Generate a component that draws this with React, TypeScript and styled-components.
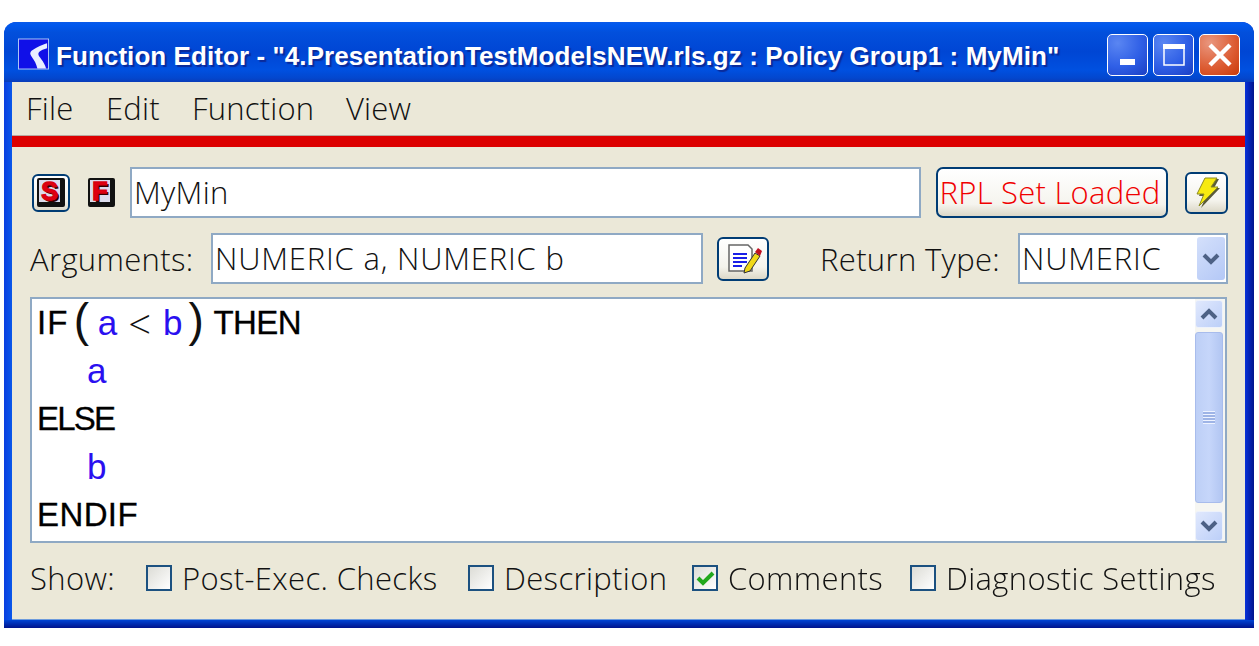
import React from "react";
import styled, { createGlobalStyle } from "styled-components";

const UI = `"Open Sans", "Liberation Sans", Arial, sans-serif`;

const Global = createGlobalStyle`
  html, body { margin: 0; padding: 0; background: #fff; }
  body { width: 1259px; height: 646px; overflow: hidden; font-family: ${UI}; font-weight: 300; }
`;
const Page = styled.div`
  box-sizing: border-box; width: 1259px; height: 646px; padding: 22px 5px 18px 4px;
`;
const Win = styled.div`
  box-sizing: border-box; width: 1250px; height: 606px; display: flex; flex-direction: column;
  border-radius: 12px 12px 0 0; padding: 0 9px 0 8px;
  background: linear-gradient(90deg, #0a3ee0 0, #0a58ea 8px, #0831d9 9px, #0831d9 calc(100% - 9px), #00138c 100%);
  filter: blur(0.35px);
`;
const TitleBar = styled.div`
  height: 60px; flex: none; display: flex; align-items: center; margin: 0 -9px 0 -8px; padding: 6px 14px 0 14px;
  border-radius: 12px 12px 0 0;
  background: linear-gradient(180deg, #0a5ae8 0, #0058ee 3px, #0250dc 10px, #0046d4 30px, #0050e0 48px, #0347ce 56px, #0a3cb8 60px);
  box-sizing: border-box;
`;
const Logo = styled.svg` width: 31px; height: 32px; flex: none; margin-top: -2px; `;
const Title = styled.div`
  margin: 3px 0 0 7px; flex: 1; color: #fff; font: bold 26px "Liberation Sans", sans-serif;
  letter-spacing: 0.07px; white-space: nowrap; text-shadow: 2px 2px 1px #0a2a9a;
`;
const WinButtons = styled.div` display: flex; gap: 5px; `;
const WinBtn = styled.div<{ $close?: boolean }>`
  box-sizing: border-box; width: 41px; height: 42px; border: 1.5px solid #fff; border-radius: 5px; display: flex; align-items: center; justify-content: center;
  background: ${p => p.$close
    ? "radial-gradient(circle at 25% 20%, #e9967e, #dc5a30 60%, #c93a0a)"
    : "radial-gradient(circle at 25% 20%, #5a86f2, #2f5fe6 55%, #1a3fc4)"};
`;
const Client = styled.div`
  flex: 1; min-height: 0; background: #ebe8d8; display: flex; flex-direction: column; border-bottom: 1px solid #6d9bdc;
`;
const Foot = styled.div`
  height: 8px; flex: none; margin: 0 -9px 0 -8px; background: linear-gradient(180deg, #0044d4, #00138c);
`;
const MenuBar = styled.div`
  height: 53px; flex: none; display: flex; align-items: center; padding: 0 0 2px 14px; box-sizing: border-box;
`;
const MenuItem = styled.span<{ $w: number }>`
  width: ${p => p.$w}px; flex: none; font-size: 31px; color: #111; letter-spacing: 0.2px;
`;
const RedBar = styled.div`
  height: 12px; flex: none; background: #dc0000; border-top: 1px solid #b8a8a0; box-sizing: border-box;
`;
const Body = styled.div` flex: 1; display: flex; flex-direction: column; padding: 20px 18px 0 18px; `;
const Row = styled.div<{ $mt?: number }>` display: flex; align-items: center; height: 51px; flex: none; margin-top: ${p => p.$mt ?? 0}px; `;
const IconBox = styled.div<{ $w: number; $h: number; $ml?: number }>`
  box-sizing: border-box; width: ${p => p.$w}px; height: ${p => p.$h}px; margin-left: ${p => p.$ml ?? 0}px; flex: none;
  display: flex; align-items: center; justify-content: center;
`;
const RoundBtn = styled(IconBox)`
  border: 2px solid #003c74; border-radius: 6px; background: linear-gradient(180deg, #fff 0, #f4f3ec 70%, #dcd8c8 100%);
`;
const LetterIcon = styled.div<{ $w: number; $h: number }>`
  box-sizing: border-box; width: ${p => p.$w}px; height: ${p => p.$h}px; background: #dcdcec;
  border: 2px solid #111; border-right-width: 5px; border-bottom-width: 5px; border-radius: 2px; display: flex; align-items: center; justify-content: center;
  font: bold 25px "Liberation Sans", sans-serif; color: #e00010; line-height: 1; -webkit-text-stroke: 1.4px #d80010; text-shadow: 2px 2px 0 #300;
`;
const Input = styled.div<{ $w: number; $ml?: number; $ls?: number }>`
  box-sizing: border-box; width: ${p => p.$w}px; height: 51px; margin-left: ${p => p.$ml ?? 0}px; flex: none;
  background: #fff; border: 2px solid #8fa9c4; display: flex; align-items: center; padding: 0 1px 2px 2px;
  font-size: 31px; color: #111; white-space: nowrap; overflow: hidden; position: relative; letter-spacing: ${p => p.$ls ?? 0.8}px;
`;
const RplBtn = styled.div`
  box-sizing: border-box; width: 232px; height: 51px; margin-left: 15px; border: 2px solid #003c74; border-radius: 7px; flex: none;
  background: linear-gradient(180deg, #fff 0, #f5f4ee 75%, #dcd8c8 100%); color: #f00000; font-size: 31px; letter-spacing: 0.25px;
  display: flex; align-items: center; justify-content: center; white-space: nowrap; padding: 0 4px 2px 0;
`;
const Label = styled.span<{ $w: number; $ml?: number }>`
  width: ${p => p.$w}px; margin-left: ${p => p.$ml ?? 0}px; flex: none; font-size: 31px; color: #111; white-space: nowrap; letter-spacing: 0.35px;
`;
const DropBtn = styled.div`
  position: absolute; right: 1px; top: 2px; bottom: 2px; width: 28px; border-radius: 3px;
  background: linear-gradient(135deg, #d4e0fb, #b4c8f6); display: flex; align-items: center; justify-content: center;
`;
const Editor = styled.div`
  box-sizing: border-box; height: 246px; margin-top: 13px; background: #fff; border: 2px solid #8fa9c4; display: flex; flex: none;
`;
const Code = styled.div`
  flex: 1; padding: 0 0 0 5px; font: 400 33px/48px "Liberation Sans", sans-serif; color: #000;
`;
const CodeLine = styled.div<{ $indent?: boolean }>`
  height: 48px; white-space: pre; padding-left: ${p => p.$indent ? 50 : 0}px; display: flex; align-items: center;
`;
const Keyword = styled.span<{ $ls: number }>`
  letter-spacing: ${p => p.$ls}px; -webkit-text-stroke: 0.3px #000;
`;
const Blue = styled.span`
  color: #2a10f0; font-size: 35px;
`;
const Paren = styled.span<{ $w: number; $ml: number }>`
  font: 400 46px "Liberation Sans", sans-serif; color: #111; margin: -6px 0 0 ${p => p.$ml}px; width: ${p => p.$w}px;
`;
const Lt = styled.span` font: 300 40px ${UI}; color: #111; margin: 0 12px 0 11px; `;
const Scroll = styled.div`
  width: 30px; flex: none; background: #f6f6f2; display: flex; flex-direction: column; padding: 1px 2px 0 0; box-sizing: border-box;
`;
const ScrollEnd = styled.div<{ $h: number }>`
  height: ${p => p.$h}px; flex: none; border-radius: 3px; background: linear-gradient(135deg, #e0e8fd, #bccff8); border: 1px solid #eef2fb; display: flex; align-items: center; justify-content: center; box-sizing: border-box;
`;
const Thumb = styled.div`
  flex: 1; margin: 4px 0 8px; border-radius: 3px; background: linear-gradient(90deg, #bdcff6, #c6d6fa 50%, #b2c6f2); border: 1px solid #a8bcec; display: flex; align-items: center; justify-content: center; box-sizing: border-box;
`;
const Grip = styled.div` width: 12px; height: 13px; background: repeating-linear-gradient(180deg, #eef3ff 0 1px, #9eb4e6 1px 3px); `;
const ShowRow = styled.div` display: flex; align-items: center; height: 70px; flex: none; `;
const Check = styled.div`
  box-sizing: border-box; width: 26px; height: 26px; margin-right: 10px; flex: none; border: 2px solid #1c5180;
  background: linear-gradient(135deg, #dcdcd6, #fff); display: flex; align-items: center; justify-content: center;
`;

const Chevron = ({ up }: { up?: boolean }) => (
  <svg width="18" height="12" viewBox="0 0 18 12">
    <path d={up ? "M2 10 L9 3 L16 10" : "M2 2 L9 9 L16 2"} fill="none" stroke="#4d6185" strokeWidth="4" />
  </svg>
);

export default function App() {
  return (
    <Page>
      <Global />
      <Win>
        <TitleBar>
          <Logo viewBox="0 0 32 32">
            <rect x="0.5" y="0.5" width="31" height="31" fill="#1010e8" stroke="#b0c8f8" />
            <path d="M30 5 C24 7 15 11 13 14 C11 18 18 21 20 31 L29 31 C27 23 21 19 21 16 C21 13 26 11 30 10 Z" fill="#e8eeff" />
          </Logo>
          <Title>Function Editor - "4.PresentationTestModelsNEW.rls.gz : Policy Group1 : MyMin"</Title>
          <WinButtons>
            <WinBtn>
              <svg width="24" height="28" viewBox="0 0 24 28"><rect x="4" y="18" width="15" height="6" fill="#fff" /></svg>
            </WinBtn>
            <WinBtn>
              <svg width="26" height="26" viewBox="0 0 26 26"><rect x="3" y="3" width="20" height="20" fill="none" stroke="#fff" strokeWidth="1.5" /><rect x="2" y="2" width="22" height="5" fill="#fff" /></svg>
            </WinBtn>
            <WinBtn $close>
              <svg width="26" height="26" viewBox="0 0 26 26"><path d="M3 3 L23 23 M23 3 L3 23" stroke="#fff" strokeWidth="4.5" /></svg>
            </WinBtn>
          </WinButtons>
        </TitleBar>
        <Client>
          <MenuBar>
            <MenuItem $w={80}>File</MenuItem>
            <MenuItem $w={86}>Edit</MenuItem>
            <MenuItem $w={154}>Function</MenuItem>
            <MenuItem $w={70}>View</MenuItem>
          </MenuBar>
          <RedBar />
          <Body>
            <Row>
              <RoundBtn $w={38} $h={38} $ml={2}><LetterIcon $w={28} $h={29}>S</LetterIcon></RoundBtn>
              <IconBox $w={27} $h={30} $ml={18}><LetterIcon $w={27} $h={29}>F</LetterIcon></IconBox>
              <Input $w={791} $ml={15} $ls={0.3}>MyMin</Input>
              <RplBtn>RPL Set Loaded</RplBtn>
              <RoundBtn $w={43} $h={42} $ml={17}>
                <svg width="30" height="34" viewBox="0 0 30 34">
                  <path d="M15 3 L27 3 L22 12 L28 12 L9 32 L14 20 L7 20 Z" fill="#5a5a3a" />
                  <path d="M13 2 L25 2 L19 11 L26 11 L7 30 L12 18 L5 18 Z" fill="#f7ea10" stroke="#8a8a20" strokeWidth="1" />
                </svg>
              </RoundBtn>
            </Row>
            <Row $mt={15}>
              <Label $w={181}>Arguments:</Label>
              <Input $w={492}>NUMERIC a, NUMERIC b</Input>
              <RoundBtn $w={52} $h={44} $ml={14}>
                <svg width="38" height="34" viewBox="0 0 38 34">
                  <path d="M5 3 H24 L28 7 V29 H5 Z" fill="#fff" stroke="#666" strokeWidth="1.5" />
                  <path d="M9 12 H23 M9 16 H23 M9 20 H23 M9 24 H18" stroke="#1a20e8" strokeWidth="2" />
                  <path d="M21 26 L31 11 L36 14 L26 29 L20 31 Z" fill="#f0d818" stroke="#333" strokeWidth="1" />
                  <path d="M31 10 L34 6 L38 9 L36 14 Z" fill="#c01020" />
                </svg>
              </RoundBtn>
              <Label $w={198} $ml={51}>Return Type:</Label>
              <Input $w={210}>
                NUMERIC
                <DropBtn><Chevron /></DropBtn>
              </Input>
            </Row>
            <Editor>
              <Code>
                <CodeLine><Keyword $ls={1.2}>IF</Keyword><Paren $ml={5} $w={24}>(</Paren><Blue>a</Blue><Lt>&lt;</Lt><Blue>b</Blue><Paren $ml={6} $w={25}>)</Paren><Keyword $ls={-0.6}>THEN</Keyword></CodeLine>
                <CodeLine $indent><Blue>a</Blue></CodeLine>
                <CodeLine><Keyword $ls={-1.8}>ELSE</Keyword></CodeLine>
                <CodeLine $indent><Blue>b</Blue></CodeLine>
                <CodeLine><Keyword $ls={0.4}>ENDIF</Keyword></CodeLine>
              </Code>
              <Scroll>
                <ScrollEnd $h={28}><Chevron up /></ScrollEnd>
                <Thumb><Grip /></Thumb>
                <ScrollEnd $h={30}><Chevron /></ScrollEnd>
              </Scroll>
            </Editor>
            <ShowRow>
              <Label $w={116}>Show:</Label>
              <Check />
              <Label $w={286}>Post-Exec. Checks</Label>
              <Check />
              <Label $w={188}>Description</Label>
              <Check>
                <svg width="19" height="17" viewBox="0 0 19 17"><path d="M2 8 L7 13 L17 3" fill="none" stroke="#22a81e" strokeWidth="4" /></svg>
              </Check>
              <Label $w={182}>Comments</Label>
              <Check />
              <Label $w={269}>Diagnostic Settings</Label>
            </ShowRow>
          </Body>
        </Client>
        <Foot />
      </Win>
    </Page>
  );
}
